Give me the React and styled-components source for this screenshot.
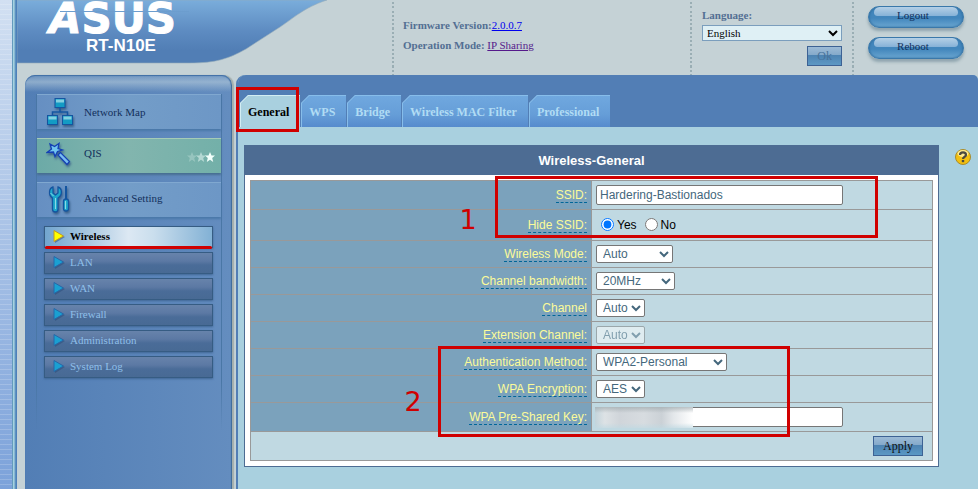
import React from "react";
import styled, { createGlobalStyle, css } from "styled-components";

const serif = '"Liberation Serif", "Times New Roman", serif';
const sans = '"Liberation Sans", Arial, sans-serif';

const GlobalStyle = createGlobalStyle`
  *, *::before, *::after { box-sizing: border-box; }
  body { margin: 0; background: #c5d2d6; font: 11px/20px ${serif}; color: #13305c; }
`;

const Shell = styled.div`
  display: flex;
  min-height: 100vh;
`;

const Edge = styled.div`
  flex: 0 0 17px;
  border-right: 1px solid #4d80ba;
  background:
    linear-gradient(90deg, transparent 12px, #649bbd 12px 13px, #a6d2e0 13px 14px, #88b9d2 14px 15px, #5d91c1 15px),
    repeating-linear-gradient(180deg, transparent 0 4px, rgba(255, 255, 255, 0.18) 4px 5px),
    linear-gradient(180deg, #d2e0f2, #7ca2da);
`;

const Page = styled.div`
  flex: 1;
  min-width: 0;
  display: flex;
  flex-direction: column;
`;

const Header = styled.header`
  display: flex;
  height: 75px;
`;

const Brand = styled.div`
  flex: 0 0 375px;
`;

const HeaderCell = styled.div`
  border-left: 2px solid transparent;
  border-image: repeating-linear-gradient(180deg, #9aaeb4 0 2px, transparent 2px 4px) 2;
  padding: 0 10px;
`;

const InfoCell = styled(HeaderCell)`
  flex: 1;
  padding: 15px 9px 0;
`;

const InfoLine = styled.div`
  color: #536f93;
  b { font-weight: bold; }
`;

const InfoLink = styled.a`
  color: ${(p) => (p.$visited ? "#551a8b" : "#0000ee")};
`;

const LanguageCell = styled(HeaderCell)`
  flex: 0 0 162px;
  display: flex;
  flex-direction: column;
  align-items: flex-end;
  gap: 5px;
  padding-top: 5px;
`;

const LanguageLabel = styled.label`
  width: 100%;
  font-weight: bold;
  color: #536f93;
  select { display: block; }
`;

const LanguageSelect = styled.select`
  width: 140px;
  height: 16px;
  border: 1px solid #7b9ebd;
  border-radius: 0;
  background-color: #dff0f5;
  color: #000;
  font: 11px ${serif};
`;

const GlossButton = styled.button`
  height: 20px;
  padding: 0 9px;
  border: 1px solid #3d6294;
  background: linear-gradient(180deg, #9dbbd6, #84a9ca 45%, #4d83b2 46%, #5c98c4);
  color: #111;
  font: 12px/16px ${serif};
  &:disabled { color: #47729a; }
`;

const ActionsCell = styled(HeaderCell)`
  flex: 0 0 126px;
  display: flex;
  flex-direction: column;
  gap: 9px;
  padding: 6px 14px;
`;

const PillButton = styled.button`
  position: relative;
  height: 22px;
  padding: 0 6px 4px 0;
  border: 1px solid #3a78aa;
  border-radius: 11px;
  background: linear-gradient(180deg, #4386bb, #4286bc 55%, #69a5d0);
  box-shadow: inset 0 0 2px #246293, 0 3px 3px rgba(90, 120, 135, 0.5);
  color: #11305b;
  font: 11px/16px ${serif};
  &::before {
    content: "";
    position: absolute;
    inset: 0 5px auto;
    height: 9px;
    border-radius: 8px 8px 5px 5px;
    background: linear-gradient(180deg, #b5d0e6, #85b1d7);
  }
  span { position: relative; }
`;

const Body = styled.div`
  flex: 1;
  display: flex;
  gap: 4px;
  padding-left: 8px;
`;

const Sidebar = styled.aside`
  flex: 0 0 207px;
  padding: 19px 9px 0 11px;
  border-radius: 10px 10px 0 0;
  border-right: 1px solid #426e9d;
  background:
    linear-gradient(180deg, rgba(190, 210, 222, 0.2), rgba(190, 210, 222, 0.55) 7px, transparent 17px) top / 100% 20px no-repeat,
    linear-gradient(90deg, #527eb5, #648dbf);
  box-shadow: inset 0 1px 1px #3f6ea6, 2px 0 1px #a4afad;
`;

const Menu = styled.nav`
  display: flex;
  flex-direction: column;
  gap: 9px;
  height: 336px;
  border: solid transparent;
  border-width: 0 1px;
  border-image: linear-gradient(180deg, #4a77a6 85%, transparent) 1;
`;

const MenuItem = styled.a`
  display: flex;
  align-items: center;
  gap: 10px;
  height: 35px;
  flex-shrink: 0;
  padding-left: 9px;
  padding-right: 5px;
  border-top: 1px solid ${(p) => (p.$highlight ? "#a5cbb7" : "#80a8d0")};
  background: ${(p) =>
    p.$highlight
      ? "linear-gradient(90deg, #6caaa7, #82b5ae 50%, #73b0a9)"
      : "linear-gradient(90deg, #668fc2, #739dc8 50%, #6d97c6)"};
  box-shadow: 0 2px 2px ${(p) => (p.$highlight ? "#476f91" : "#4a78a9")};
  color: #13305c;
  text-decoration: none;
  svg { flex: none; }
`;

const MenuText = styled.span`
  flex: 1;
  padding-bottom: ${(p) => p.$lift || 0}px;
`;

const SubMenu = styled.ul`
  display: flex;
  flex-direction: column;
  gap: 4px;
  margin: 0;
  padding: 0 8px 0 7px;
  list-style: none;
`;

const SubLink = styled.a`
  position: relative;
  display: flex;
  align-items: center;
  gap: 4px;
  height: 22px;
  padding: 0 7px 2px;
  border: 1px solid #365c83;
  background: linear-gradient(180deg, #6783ab, #5c79a4 40%, #4a6c98 60%, #486a94);
  box-shadow: 0 1px 2px #3f6695;
  color: #8fbfe9;
  text-decoration: none;
  ${(p) =>
    p.$current &&
    css`
      background: linear-gradient(90deg, #72a5ce, #dce8f3 50%, #cadeed 65%, #82b1d5);
      color: #000;
      font-weight: bold;
    `}
`;

const MarkerLine = styled.span`
  position: absolute;
  left: 0;
  right: 0;
  bottom: -2px;
  height: 3px;
  border-radius: 2px;
  background: #d00000;
`;

const Main = styled.main`
  flex: 1;
  min-width: 0;
  border-left: 2px solid #527eb5;
  border-radius: 9px 5px 0 0;
  background: #a9d0df;
`;

const TabBar = styled.div`
  display: flex;
  align-items: flex-end;
  gap: 1px;
  height: 52px;
  padding-left: 2px;
  border-radius: 8px 5px 0 0;
  background: #527eb5;
`;

const Tab = styled.button`
  --edge: ${(p) => (p.$active ? "#d3edf3" : "#87bdea")};
  position: relative;
  height: 32px;
  padding: 3px 11px 0 8px;
  border: 0;
  background:
    linear-gradient(135deg, #527eb5 5px, var(--edge) 6px, transparent 7px),
    linear-gradient(180deg, var(--edge) 1px, transparent 1px),
    linear-gradient(90deg, var(--edge) 1px, transparent 1px),
    ${(p) => (p.$active ? "#a9d0df" : "linear-gradient(180deg, #70a8df, #669ed8 60%, #568bcd)")};
  color: ${(p) => (p.$active ? "#000" : "#b1dcf4")};
  font: bold 12px ${serif};
`;

const Marker = styled.span`
  position: absolute;
  border: 3px solid #d00000;
  pointer-events: none;
`;

const TabMarker = styled(Marker)`
  inset: -8px 1px -5px -4px;
`;

const NetworkMarker = styled(Marker)`
  left: calc(50% - 97px);
  top: 30px;
  width: 383px;
  height: 62px;
`;

const SecurityMarker = styled(Marker)`
  left: calc(50% - 154px);
  top: 200px;
  width: 352px;
  height: 91px;
`;

const StepNumber = styled.span`
  position: absolute;
  left: calc(50% - ${(p) => p.$offset}px);
  top: ${(p) => p.$top}px;
  color: #d00000;
  font: 27px/32px "DejaVu Sans", sans-serif;
  pointer-events: none;
`;

const Content = styled.div`
  display: flex;
  align-items: flex-start;
  gap: 16px;
  padding: 18px 7px 22px 6px;
`;

const Panel = styled.section`
  position: relative;
  flex: 1;
  border: 1px solid #4d6c93;
  background: #fff;
  font: 12px/14px ${sans};
`;

const PanelTitle = styled.h1`
  margin: 0;
  background: #4d6c93;
  color: #fff;
  font: bold 13px/29px ${sans};
  text-align: center;
`;

const PanelForm = styled.form`
  padding: 5px;
`;

const FormTable = styled.table`
  width: 100%;
  border-collapse: collapse;
  table-layout: fixed;
  background: #c0d9e2;
  th, td { border: 1px solid #999; }
`;

const Row = styled.tr`
  height: ${(p) => p.$height || 27}px;
`;

const LabelCell = styled.th`
  padding: 0 4px 0 0;
  background: #7ba2bc;
  text-align: right;
  font-weight: normal;
`;

const FieldLabel = styled.label`
  border-bottom: 1px dashed #006699;
  color: #fbfb99;
`;

const FieldCell = styled.td`
  position: relative;
  padding: 0 4px;
`;

const ApplyCell = styled.td`
  padding: 0 9px;
  text-align: right;
`;

const TextInput = styled.input`
  display: block;
  width: 247px;
  height: 20px;
  padding: 0 3px;
  border: 1px solid #767676;
  border-radius: 2px;
  background: #fff;
  color: #44677c;
  font: 12px ${sans};
`;

const Select = styled.select`
  display: block;
  width: ${(p) => p.$width}px;
  height: 18px;
  padding: 0 0 0 2px;
  border: 1px solid #767676;
  border-radius: 2px;
  background-color: #fff;
  color: #44677c;
  font: 12px ${sans};
  &:disabled { opacity: 0.5; color: #44677c; }
`;

const Radios = styled.div`
  display: flex;
  align-items: center;
  gap: 8px;
  padding: 0 5px 1px;
  color: #000;
`;

const RadioLabel = styled.label`
  display: flex;
  align-items: center;
  gap: 3px;
  input { width: 13px; height: 13px; margin: 0; }
`;

const KeyMask = styled.span`
  position: absolute;
  left: 3px;
  top: 4px;
  width: 98px;
  height: 21px;
  background:
    linear-gradient(180deg, rgba(160, 170, 174, 0.7), transparent 6px 16px, rgba(192, 217, 226, 0.7)),
    linear-gradient(90deg, #c3d4db, #dde2e5 10%, #d0d5da 25%, #d7dce0 50%, #cbd1d6 68%, #e3e7ea 80%, #fff);
`;

const HelpButton = styled.button`
  display: block;
  margin-top: 4px;
  padding: 0;
  border: 0;
  background: none;
  svg { display: block; }
`;

const Logo = () => (
  <svg width="320" height="64" viewBox="17 0 320 64" role="img" aria-label="ASUS RT-N10E">
    <defs>
      <linearGradient id="banner" x1="0" y1="0" x2="0" y2="1">
        <stop offset="0" stopColor="#7aaddb" />
        <stop offset="0.5" stopColor="#5d8bc1" />
        <stop offset="0.8" stopColor="#517eb5" />
      </linearGradient>
    </defs>
    <path d="M17 0H327C303 8 294 18 280 27L246 49C228 59 216 63 190 63H17Z" fill="url(#banner)" stroke="#96adba" strokeWidth="0.6" />
    <text x="49" y="33" fill="#fff" stroke="#fff" strokeWidth="1" fontFamily="DejaVu Sans" fontWeight="bold" fontSize="42">
      <tspan fontStyle="italic">A</tspan>SUS
    </text>
    <path d="M60 11.500H189" stroke="#6c9dce" strokeWidth="1" />
    <text x="121" y="51" textAnchor="middle" fill="#fff" fontFamily="Liberation Sans" fontWeight="bold" fontSize="17">
      RT-N10E
    </text>
  </svg>
);

const IconSvg = styled.svg`
  filter: drop-shadow(1px 2px 1px #3b628c);
`;

const NetworkIcon = () => (
  <IconSvg width="28" height="30" viewBox="0 0 28 30" aria-hidden="true">
    <path d="M14 11V15M6.500 18V15H21.500V18" fill="none" stroke="#1455a0" strokeWidth="1.500" />
    {[[9, 1.5], [1.5, 18.5], [16.5, 18.5]].map(([x, y]) => (
      <g key={x}>
        <rect x={x} y={y} width="10" height="9" fill="#139bc4" stroke="#1455a0" />
        <rect x={x + 1} y={y + 1} width="8" height="3" fill="#83cfe0" />
      </g>
    ))}
  </IconSvg>
);

const WandIcon = () => (
  <IconSvg width="28" height="30" viewBox="0 0 28 30" aria-hidden="true">
    <path d="M12 14L14.500 11.500L23.500 20.500L21 23.500Z" fill="#79bdf0" stroke="#1440b4" strokeWidth="1.200" />
    <path d="M4 3L8.500 5.500L13 2.500L12 7.500L16.500 9L11.500 10.500L9 15.500L7.500 11L1 11.500L5.500 8Z" fill="#71c4ef" stroke="#1440b4" strokeWidth="1.300" />
  </IconSvg>
);

const ToolsIcon = () => (
  <IconSvg width="28" height="30" viewBox="0 0 28 30" aria-hidden="true">
    <path d="M7 2C3 3 2 10 6.500 13V24C6.500 28 12 28 12 24V13C17 10 16 3 12 2V8L9.500 10L7 8Z" fill="#1ea7cb" stroke="#1455a0" strokeWidth="1.300" />
    <path d="M9.500 13V24M4.500 8L7.500 11" stroke="#8ad9e5" />
    <path d="M20 1V16" stroke="#1455a0" strokeWidth="2" />
    <rect x="17.500" y="14" width="5" height="12" rx="2.500" fill="#1ea7cb" stroke="#1455a0" strokeWidth="1.300" />
    <path d="M19.500 16V24" stroke="#8ad9e5" />
  </IconSvg>
);

const Star = ({ x, opacity }) => (
  <path transform={`translate(${x} 8)`} opacity={opacity} d="M0-5L1.500-1.500L5-1.500L2.200 1L3.200 5L0 2.700L-3.200 5L-2.200 1L-5-1.500L-1.500-1.500Z" fill="#f2fffb" />
);

const StarsIcon = () => (
  <svg width="30" height="14" viewBox="0 0 30 14" aria-hidden="true">
    <Star x={6} opacity={0.25} />
    <Star x={15} opacity={0.5} />
    <Star x={24} opacity={1} />
  </svg>
);

const ArrowIcon = ({ current }) => (
  <svg width="14" height="14" viewBox="0 0 14 14" aria-hidden="true">
    <path d="M3 3L13 8L3 14Z" fill="#2c4c76" opacity="0.5" />
    <path d="M2 1.500L11.500 7L2 12.500Z" fill={current ? "#ffff00" : "#1aa0d2"} stroke={current ? "#c39a20" : "#2767a8"} />
  </svg>
);

const HelpIcon = () => (
  <svg width="16" height="16" viewBox="0 0 16 16" aria-hidden="true">
    <circle cx="8" cy="8" r="7.500" fill="#f3c010" stroke="#a88b2c" />
    <ellipse cx="8" cy="4.500" rx="5.500" ry="3.500" fill="#ffea91" />
    <path d="M5 6C5 2.500 11 2.500 11 6C11 8 8 7.500 8 10" fill="none" stroke="#4c4a40" strokeWidth="2.200" />
    <rect x="6.800" y="11" width="2.400" height="2.200" fill="#4c4a40" />
  </svg>
);

const subItems = ["Wireless", "LAN", "WAN", "Firewall", "Administration", "System Log"];
const tabs = ["General", "WPS", "Bridge", "Wireless MAC Filter", "Professional"];

const SelectRow = ({ id, label, value, width, disabled }) => (
  <Row>
    <LabelCell scope="row"><FieldLabel htmlFor={id}>{label}</FieldLabel></LabelCell>
    <FieldCell>
      <Select id={id} $width={width} disabled={disabled} defaultValue={value}>
        <option>{value}</option>
      </Select>
    </FieldCell>
  </Row>
);

export default function App() {
  return (
    <Shell>
      <GlobalStyle />
      <Edge />
      <Page>
        <Header>
          <Brand><Logo /></Brand>
          <InfoCell>
            <InfoLine><b>Firmware Version:</b><InfoLink href="#firmware">2.0.0.7</InfoLink></InfoLine>
            <InfoLine><b>Operation Mode:</b> <InfoLink href="#mode" $visited>IP Sharing</InfoLink></InfoLine>
          </InfoCell>
          <LanguageCell>
            <LanguageLabel>
              Language:
              <LanguageSelect defaultValue="English"><option>English</option></LanguageSelect>
            </LanguageLabel>
            <GlossButton type="button" disabled>Ok</GlossButton>
          </LanguageCell>
          <ActionsCell>
            <PillButton type="button"><span>Logout</span></PillButton>
            <PillButton type="button"><span>Reboot</span></PillButton>
          </ActionsCell>
        </Header>
        <Body>
          <Sidebar>
            <Menu aria-label="Router menu">
              <MenuItem href="#map"><NetworkIcon /><MenuText>Network Map</MenuText></MenuItem>
              <MenuItem href="#qis" $highlight><WandIcon /><MenuText $lift={6}>QIS</MenuText><StarsIcon /></MenuItem>
              <MenuItem href="#advanced"><ToolsIcon /><MenuText $lift={4}>Advanced Setting</MenuText></MenuItem>
              <SubMenu>
                {subItems.map((name, i) => (
                  <li key={name}>
                    <SubLink href={`#${name}`} $current={i === 0}>
                      <ArrowIcon current={i === 0} />
                      {name}
                      {i === 0 && <MarkerLine />}
                    </SubLink>
                  </li>
                ))}
              </SubMenu>
            </Menu>
          </Sidebar>
          <Main>
            <TabBar>
              {tabs.map((name, i) => (
                <Tab key={name} type="button" $active={i === 0}>
                  {name}
                  {i === 0 && <TabMarker />}
                </Tab>
              ))}
            </TabBar>
            <Content>
              <Panel>
                <PanelTitle>Wireless-General</PanelTitle>
                <PanelForm onSubmit={(e) => e.preventDefault()}>
                  <FormTable>
                    <tbody>
                      <Row $height={29}>
                        <LabelCell scope="row"><FieldLabel htmlFor="ssid">SSID:</FieldLabel></LabelCell>
                        <FieldCell><TextInput id="ssid" defaultValue="Hardering-Bastionados" /></FieldCell>
                      </Row>
                      <Row $height={31}>
                        <LabelCell scope="row"><FieldLabel htmlFor="hide-yes">Hide SSID:</FieldLabel></LabelCell>
                        <FieldCell>
                          <Radios>
                            <RadioLabel><input id="hide-yes" type="radio" name="hide" defaultChecked />Yes</RadioLabel>
                            <RadioLabel><input type="radio" name="hide" />No</RadioLabel>
                          </Radios>
                        </FieldCell>
                      </Row>
                      <SelectRow id="mode" label="Wireless Mode:" value="Auto" width={77} />
                      <SelectRow id="bandwidth" label="Channel bandwidth:" value="20MHz" width={79} />
                      <SelectRow id="channel" label="Channel" value="Auto" width={49} />
                      <SelectRow id="extension" label="Extension Channel:" value="Auto" width={49} disabled />
                      <SelectRow id="auth" label="Authentication Method:" value="WPA2-Personal" width={131} />
                      <SelectRow id="encryption" label="WPA Encryption:" value="AES" width={49} />
                      <Row $height={29}>
                        <LabelCell scope="row"><FieldLabel htmlFor="key">WPA Pre-Shared Key:</FieldLabel></LabelCell>
                        <FieldCell><TextInput id="key" /><KeyMask /></FieldCell>
                      </Row>
                      <Row $height={29}>
                        <ApplyCell colSpan={2}><GlossButton type="submit">Apply</GlossButton></ApplyCell>
                      </Row>
                    </tbody>
                  </FormTable>
                </PanelForm>
                <NetworkMarker />
                <SecurityMarker />
                <StepNumber $offset={132} $top={58}>1</StepNumber>
                <StepNumber $offset={187} $top={240}>2</StepNumber>
              </Panel>
              <HelpButton type="button" aria-label="Help"><HelpIcon /></HelpButton>
            </Content>
          </Main>
        </Body>
      </Page>
    </Shell>
  );
}
